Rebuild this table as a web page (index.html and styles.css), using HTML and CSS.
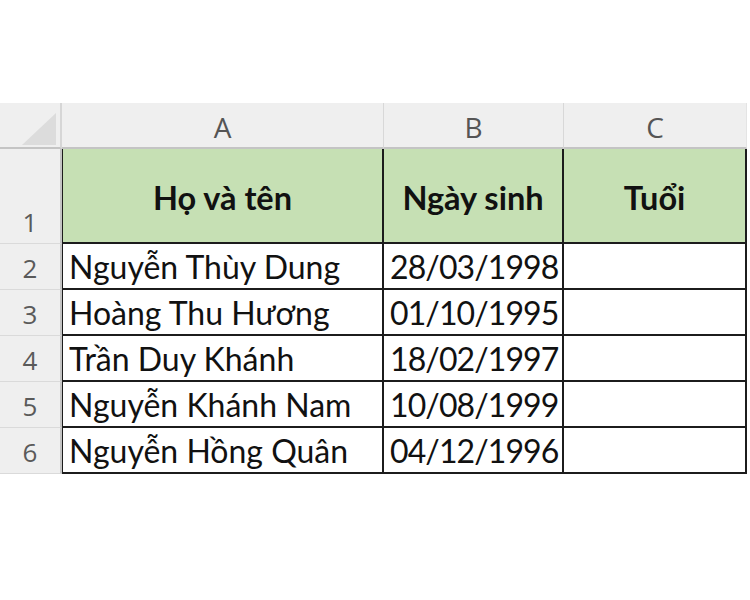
FILE: index.html
```html
<!DOCTYPE html>
<html lang="vi">
<head>
<meta charset="utf-8">
<title>Sheet</title>
<link rel="stylesheet" href="styles.css">
</head>
<body>
<div class="sheet">
  <div class="corner"><span class="tri"></span></div>
  <div class="colh">A</div>
  <div class="colh">B</div>
  <div class="colh last">C</div>

  <div class="rowh">1</div>
  <div class="cell head first">Họ và tên</div>
  <div class="cell head">Ngày sinh</div>
  <div class="cell head">Tuổi</div>

  <div class="rowh">2</div>
  <div class="cell first">Nguyễn Thùy Dung</div>
  <div class="cell date">28/03/1998</div>
  <div class="cell"></div>

  <div class="rowh">3</div>
  <div class="cell first">Hoàng Thu Hương</div>
  <div class="cell date">01/10/1995</div>
  <div class="cell"></div>

  <div class="rowh">4</div>
  <div class="cell first">Trần Duy Khánh</div>
  <div class="cell date">18/02/1997</div>
  <div class="cell"></div>

  <div class="rowh">5</div>
  <div class="cell first">Nguyễn Khánh Nam</div>
  <div class="cell date">10/08/1999</div>
  <div class="cell"></div>

  <div class="rowh">6</div>
  <div class="cell first">Nguyễn Hồng Quân</div>
  <div class="cell date">04/12/1996</div>
  <div class="cell"></div>
</div>
</body>
</html>
```

FILE: styles.css
```css
* { box-sizing: border-box; }
html, body { margin: 0; padding: 0; background: #fff; }
body { width: 750px; height: 600px; overflow: hidden; }

.sheet {
  margin-top: 103px;
  display: grid;
  grid-template-columns: 62px 322px 180px 183px;
  grid-template-rows: 46px 95px repeat(5, 46px);
  width: 747px;
  font-family: Lato, "Open Sans", sans-serif;
}

.corner {
  background: #efefef;
  border-right: 2px solid #d6d6d6;
  border-bottom: 2px solid #c4c4c4;
  display: flex;
  align-items: flex-end;
  justify-content: flex-end;
  padding: 0 4px 2px 0;
}
.tri {
  width: 34px;
  height: 32px;
  background: #dcdcdc;
  clip-path: polygon(100% 0, 100% 100%, 0 100%);
}

.colh {
  background: #efefef;
  border-right: 1px solid #d8d8d8;
  border-bottom: 2px solid #c4c4c4;
  display: flex;
  align-items: center;
  justify-content: center;
  font-family: "Open Sans", sans-serif;
  font-size: 28px;
  color: #555;
  padding-top: 4px;
}
.colh.last { border-right: 1px solid #e4e4e4; }

.rowh {
  background: #efefef;
  border-right: 2px solid #c4c4c4;
  border-bottom: 1px solid #dadada;
  display: flex;
  align-items: flex-end;
  justify-content: center;
  font-family: "Open Sans", sans-serif;
  font-size: 26px;
  color: #5a5a5a;
  padding-bottom: 8px;
  line-height: 1;
}

.cell {
  border-right: 2px solid #1c1c1c;
  border-bottom: 2px solid #1c1c1c;
  display: flex;
  align-items: flex-end;
  padding: 0 6px 5px 6px;
  font-size: 32px;
  line-height: 1;
  color: #111;
  white-space: nowrap;
}
.cell.first { border-left: 1px solid #1c1c1c; }
.cell.date { letter-spacing: -0.9px; }

.cell.head {
  background: #c6e0b4;
  font-weight: 700;
  justify-content: center;
  align-items: center;
  padding: 6px 0 0 0;
  font-size: 32.5px;
}
```
